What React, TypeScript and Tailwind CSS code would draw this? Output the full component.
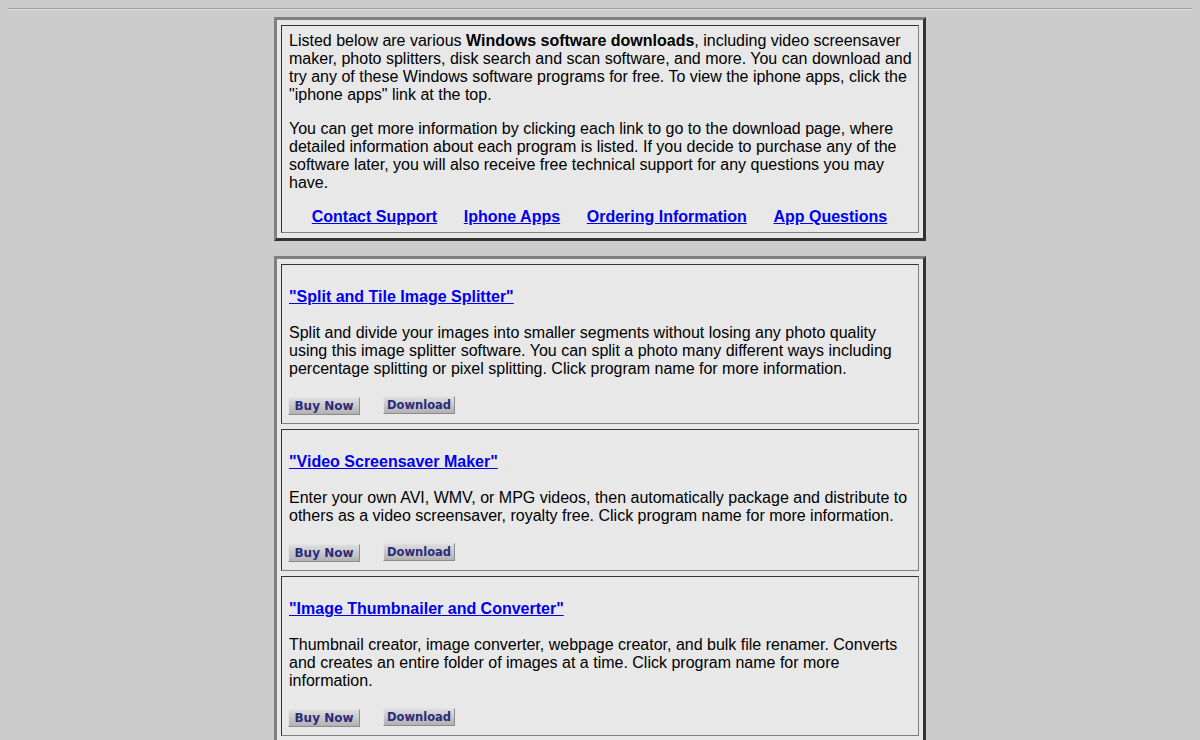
import type { ReactNode } from 'react';

const programs = [
  {
    name: '"Split and Tile Image Splitter"',
    text: 'Split and divide your images into smaller segments without losing any photo quality using this image splitter software. You can split a photo many different ways including percentage splitting or pixel splitting. Click program name for more information.',
  },
  {
    name: '"Video Screensaver Maker"',
    text: 'Enter your own AVI, WMV, or MPG videos, then automatically package and distribute to others as a video screensaver, royalty free. Click program name for more information.',
  },
  {
    name: '"Image Thumbnailer and Converter"',
    text: 'Thumbnail creator, image converter, webpage creator, and bulk file renamer. Converts and creates an entire folder of images at a time. Click program name for more information.',
  },
];

const links = ['Contact Support', 'Iphone Apps', 'Ordering Information', 'App Questions'];

function Box({ children }: { children: ReactNode }) {
  // table border=3, cellspacing ~4/5
  return (
    <div className="mx-auto flex w-[652px] flex-col gap-[5px] border-[3px] border-t-[#808080] border-l-[#808080] border-b-[#333333] border-r-[#333333] bg-[#e8e8e8] px-[4px] py-[5px]">
      {children}
    </div>
  );
}

function Cell({ children }: { children: ReactNode }) {
  return (
    <div className="border border-t-[#333333] border-l-[#333333] border-b-[#808080] border-r-[#808080] bg-[#e8e8e8] py-[6px] pl-[7px] pr-[5px]">
      {children}
    </div>
  );
}

function ImgButton({ label, className }: { label: string; className?: string }) {
  return (
    <span
      className={`flex h-[18px] w-[72px] items-center justify-center border border-t-[#e4e4e4] border-l-[#e4e4e4] border-b-[#8c8c8c] border-r-[#8c8c8c] bg-gradient-to-b from-[#dedede] to-[#b2b2b2] font-bold text-[#2b2b7d] [font-family:'DejaVu_Sans',Verdana,sans-serif] ${className ?? ''}`}
    >
      {label}
    </span>
  );
}

export default function App() {
  return (
    <div className="min-h-[740px] bg-[#cccccc] pb-4 text-[16px] leading-[18px] text-black [font-family:'Liberation_Sans',Arial,sans-serif]">
      <div className="mx-2 pt-2">
        <div className="border-t border-b border-t-[#a0a0a0] border-b-[#e2e2e2]" />
      </div>

      <div className="mt-[7px]">
        <Box>
          <Cell>
            <p>
              Listed below are various <b>Windows software downloads</b>, including video screensaver
              maker, photo splitters, disk search and scan software, and more. You can download and
              try any of these Windows software programs for free. To view the iphone apps, click the
              "iphone apps" link at the top.
            </p>
            <p className="mt-4">
              You can get more information by clicking each link to go to the download page, where
              detailed information about each program is listed. If you decide to purchase any of the
              software later, you will also receive free technical support for any questions you may
              have.
            </p>
            <p className="mt-4 flex justify-center gap-[26.7px] pr-[3px] font-bold">
              {links.map((l) => (
                <a key={l} href="#" className="text-[#0000ee] underline">
                  {l}
                </a>
              ))}
            </p>
          </Cell>
        </Box>
      </div>

      <div className="mt-[15px]">
        <Box>
          {programs.map((p) => (
            <Cell key={p.name}>
              <p className="mt-[17px] mb-[18px] font-bold">
                <a href="#" className="text-[#0000ee] underline">
                  {p.name}
                </a>
              </p>
              <p>{p.text}</p>
              <div className="-ml-px mt-[18px] flex h-[21px] items-start gap-[23px]">
                <ImgButton label="Buy Now" className="mt-px text-[12px]" />
                <ImgButton label="Download" className="text-[11.5px]" />
              </div>
            </Cell>
          ))}
        </Box>
      </div>
    </div>
  );
}
